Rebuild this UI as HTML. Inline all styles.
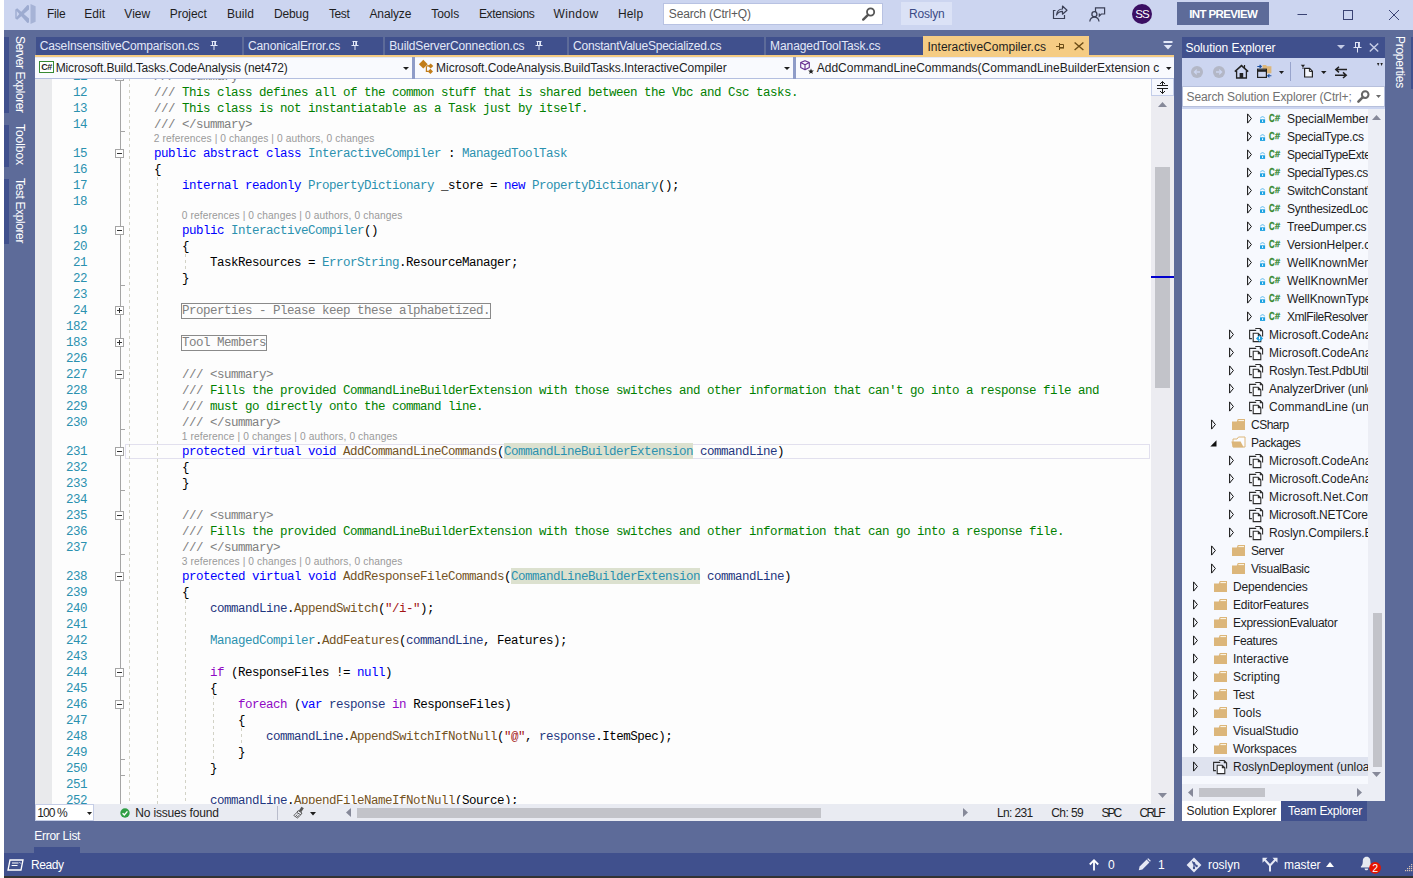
<!DOCTYPE html>
<html lang="en"><head><meta charset="utf-8"><title>InteractiveCompiler.cs - Roslyn</title>
<style>
html,body{margin:0;padding:0}
body{width:1413px;height:878px;overflow:hidden;position:relative;background:#5d6b99;font:12px/16px 'Liberation Sans',sans-serif;color:#1e1e1e}
div,span,svg{box-sizing:border-box}
svg{position:absolute;overflow:visible}

.k{color:#0000ff}.c{color:#8f08c4}.t{color:#2b91af}.m{color:#74531f}.v{color:#1f377f}.s{color:#a31515}.g{color:#008000}.x{color:#808080}
.code{position:absolute;left:126px;white-space:pre;font:12.5px/16px 'Liberation Mono',monospace;letter-spacing:-0.501px;color:#000;height:16px}
.ln{position:absolute;left:52px;width:35px;text-align:right;white-space:pre;font:12.5px/16px 'Liberation Mono',monospace;letter-spacing:-0.501px;color:#2b91af;height:16px}
.hl{background:#dce1cf;padding:2.4px 0 0}

</style></head><body>
<div style="position:absolute;left:0px;top:0px;width:1413px;height:30px;background:#ccd5f0;"></div>
<div style="position:absolute;left:0px;top:0px;width:4px;height:878px;background:#ffffff;"></div>
<div style="position:absolute;left:4px;top:876px;width:1409px;height:2px;background:#333333;"></div>
<div style="position:absolute;left:4px;top:853px;width:1409px;height:23px;background:#40508d;"></div>
<span style="position:absolute;left:46.9px;top:6px;white-space:pre;color:#1e1e1e;font:normal 12px/16px 'Liberation Sans',sans-serif;letter-spacing:-0.186px;">File</span>
<span style="position:absolute;left:84.3px;top:6px;white-space:pre;color:#1e1e1e;font:normal 12px/16px 'Liberation Sans',sans-serif;letter-spacing:0.053px;">Edit</span>
<span style="position:absolute;left:124.3px;top:6px;white-space:pre;color:#1e1e1e;font:normal 12px/16px 'Liberation Sans',sans-serif;letter-spacing:0.051px;">View</span>
<span style="position:absolute;left:169.7px;top:6px;white-space:pre;color:#1e1e1e;font:normal 12px/16px 'Liberation Sans',sans-serif;letter-spacing:-0.023px;">Project</span>
<span style="position:absolute;left:227.0px;top:6px;white-space:pre;color:#1e1e1e;font:normal 12px/16px 'Liberation Sans',sans-serif;letter-spacing:0.062px;">Build</span>
<span style="position:absolute;left:273.9px;top:6px;white-space:pre;color:#1e1e1e;font:normal 12px/16px 'Liberation Sans',sans-serif;letter-spacing:-0.095px;">Debug</span>
<span style="position:absolute;left:328.9px;top:6px;white-space:pre;color:#1e1e1e;font:normal 12px/16px 'Liberation Sans',sans-serif;letter-spacing:-0.354px;">Test</span>
<span style="position:absolute;left:369.5px;top:6px;white-space:pre;color:#1e1e1e;font:normal 12px/16px 'Liberation Sans',sans-serif;letter-spacing:-0.129px;">Analyze</span>
<span style="position:absolute;left:431.2px;top:6px;white-space:pre;color:#1e1e1e;font:normal 12px/16px 'Liberation Sans',sans-serif;letter-spacing:-0.003px;">Tools</span>
<span style="position:absolute;left:478.9px;top:6px;white-space:pre;color:#1e1e1e;font:normal 12px/16px 'Liberation Sans',sans-serif;letter-spacing:-0.310px;">Extensions</span>
<span style="position:absolute;left:553.5px;top:6px;white-space:pre;color:#1e1e1e;font:normal 12px/16px 'Liberation Sans',sans-serif;letter-spacing:0.385px;">Window</span>
<span style="position:absolute;left:618.0px;top:6px;white-space:pre;color:#1e1e1e;font:normal 12px/16px 'Liberation Sans',sans-serif;letter-spacing:0.128px;">Help</span>
<svg style="left:14.5px;top:4px" width="21" height="20" viewBox="0 0 21 20"><g fill="#9dabd0"><path d="M0.3 5.4 L2.2 4.2 L14 14.4 V18.4 L12.4 18.9 Z"/><path d="M0.3 14.6 L2.2 15.8 L14 5.6 V1.6 L12.4 1.1 Z"/><path d="M0.3 5.4 L1.7 6.6 V13.4 L0.3 14.6 Z"/></g><path d="M15.5 0 L20.6 2.2 V17.8 L15.5 20 Z" fill="#a6b3d6"/></svg>
<div style="position:absolute;left:663px;top:3px;width:220px;height:22px;background:#ffffff;border:1px solid #b8c2e2;"></div>
<span style="position:absolute;left:668.8px;top:6px;white-space:pre;color:#5a5a5a;font:normal 12px/16px 'Liberation Sans',sans-serif;letter-spacing:-0.157px;">Search (Ctrl+Q)</span>
<svg style="left:862px;top:7px" width="14" height="14" viewBox="0 0 14 14"><circle cx="8.6" cy="5" r="3.6" fill="none" stroke="#555" stroke-width="1.8"/><path d="M6 7.8 L1.2 12.6" stroke="#555" stroke-width="2.4" stroke-linecap="round"/></svg>
<div style="position:absolute;left:901px;top:2px;width:51px;height:23px;background:#dbe2f6;"></div>
<span style="position:absolute;left:909px;top:6px;white-space:pre;color:#3c4a85;font:normal 12px/16px 'Liberation Sans',sans-serif;letter-spacing:-0.198px;">Roslyn</span>
<svg style="left:1052px;top:4px" width="16" height="16" viewBox="0 0 16 16"><path d="M3.5 6.5 H1.5 V14.5 H12.5 V11" fill="none" stroke="#3a3f55" stroke-width="1.2"/><path d="M4.5 11 C5 7 7.5 5 10.5 5 V2 L15 6.2 L10.5 10.2 V7.4 C8 7.4 6 8.4 4.5 11 Z" fill="none" stroke="#3a3f55" stroke-width="1.2" stroke-linejoin="round"/></svg>
<svg style="left:1089px;top:7px" width="17" height="15" viewBox="0 0 17 15"><path d="M6.5 5 V0.8 H15.6 V7 H12.3 L10.3 9 V7 H9.6" fill="none" stroke="#3a3f55" stroke-width="1.2"/><circle cx="5.4" cy="7.2" r="2.5" fill="none" stroke="#3a3f55" stroke-width="1.3"/><path d="M0.8 14.5 C1.2 11.5 3 10.2 5.4 10.2 C7.8 10.2 9.6 11.5 10 14.5" fill="none" stroke="#3a3f55" stroke-width="1.3"/></svg>
<div style="position:absolute;left:1132px;top:3.5px;width:20px;height:20px;background:#3b0f63;border-radius:50%;"></div>
<span style="position:absolute;left:1135.2px;top:5.5px;white-space:pre;color:#ffffff;font:normal 11.5px/16px 'Liberation Sans',sans-serif;letter-spacing:-0.872px;">SS</span>
<div style="position:absolute;left:1177px;top:2px;width:92px;height:23px;background:#5d6b99;"></div>
<span style="position:absolute;left:1189.2px;top:5.5px;white-space:pre;color:#ffffff;font:bold 11.5px/16px 'Liberation Sans',sans-serif;letter-spacing:-0.615px;">INT PREVIEW</span>
<svg style="left:1290px;top:4px" width="120" height="22" viewBox="0 0 120 22"><path d="M7.5 10.5 H17" stroke="#3a4374" stroke-width="1"/><rect x="53.5" y="6.5" width="9" height="9" fill="none" stroke="#3a4374" stroke-width="1"/><path d="M99 6 L109 16 M109 6 L99 16" stroke="#3a4374" stroke-width="1"/></svg>
<div style="position:absolute;left:4px;top:37px;width:5px;height:76px;background:#40508d;"></div>
<span style="position:absolute;left:27.5px;top:36.2px;white-space:pre;color:#ffffff;font:normal 12px/16px 'Liberation Sans',sans-serif;letter-spacing:-0.458px;transform-origin:0 0;transform:rotate(90deg);">Server Explorer</span>
<div style="position:absolute;left:4px;top:125px;width:5px;height:42px;background:#40508d;"></div>
<span style="position:absolute;left:27.5px;top:124.2px;white-space:pre;color:#ffffff;font:normal 12px/16px 'Liberation Sans',sans-serif;letter-spacing:-0.054px;transform-origin:0 0;transform:rotate(90deg);">Toolbox</span>
<div style="position:absolute;left:4px;top:179px;width:5px;height:65px;background:#40508d;"></div>
<span style="position:absolute;left:27.5px;top:178.2px;white-space:pre;color:#ffffff;font:normal 12px/16px 'Liberation Sans',sans-serif;letter-spacing:-0.387px;transform-origin:0 0;transform:rotate(90deg);">Test Explorer</span>
<div style="position:absolute;left:36px;top:37px;width:206px;height:18px;background:#40508d;"></div>
<span style="position:absolute;left:39.7px;top:38px;white-space:pre;color:#e3e8f8;font:normal 12px/16px 'Liberation Sans',sans-serif;letter-spacing:-0.188px;">CaseInsensitiveComparison.cs</span>
<svg style="left:210px;top:41px" width="8" height="9" viewBox="0 0 8 9"><path d="M1.5 0.5 H6.5 M2.5 0.5 V4.5 M5.5 0.5 V4.5 M4.8 0.5 V4.5 M0.5 4.5 H7.5 M4 4.5 V9" fill="none" stroke="#e3e8f8" stroke-width="1"/></svg>
<div style="position:absolute;left:244px;top:37px;width:139px;height:18px;background:#40508d;"></div>
<span style="position:absolute;left:248.1px;top:38px;white-space:pre;color:#e3e8f8;font:normal 12px/16px 'Liberation Sans',sans-serif;letter-spacing:-0.160px;">CanonicalError.cs</span>
<svg style="left:351px;top:41px" width="8" height="9" viewBox="0 0 8 9"><path d="M1.5 0.5 H6.5 M2.5 0.5 V4.5 M5.5 0.5 V4.5 M4.8 0.5 V4.5 M0.5 4.5 H7.5 M4 4.5 V9" fill="none" stroke="#e3e8f8" stroke-width="1"/></svg>
<div style="position:absolute;left:384.5px;top:37px;width:182.5px;height:18px;background:#40508d;"></div>
<span style="position:absolute;left:389.2px;top:38px;white-space:pre;color:#e3e8f8;font:normal 12px/16px 'Liberation Sans',sans-serif;letter-spacing:-0.116px;">BuildServerConnection.cs</span>
<svg style="left:535px;top:41px" width="8" height="9" viewBox="0 0 8 9"><path d="M1.5 0.5 H6.5 M2.5 0.5 V4.5 M5.5 0.5 V4.5 M4.8 0.5 V4.5 M0.5 4.5 H7.5 M4 4.5 V9" fill="none" stroke="#e3e8f8" stroke-width="1"/></svg>
<div style="position:absolute;left:568.5px;top:37px;width:195.5px;height:18px;background:#40508d;"></div>
<span style="position:absolute;left:573.1px;top:38px;white-space:pre;color:#e3e8f8;font:normal 12px/16px 'Liberation Sans',sans-serif;letter-spacing:-0.231px;">ConstantValueSpecialized.cs</span>
<div style="position:absolute;left:765.5px;top:37px;width:157.5px;height:18px;background:#40508d;"></div>
<span style="position:absolute;left:770.1px;top:38px;white-space:pre;color:#e3e8f8;font:normal 12px/16px 'Liberation Sans',sans-serif;letter-spacing:-0.092px;">ManagedToolTask.cs</span>
<div style="position:absolute;left:923px;top:36px;width:166px;height:21px;background:#f5cc84;"></div>
<span style="position:absolute;left:927.5px;top:38.5px;white-space:pre;color:#1e1e1e;font:normal 12px/16px 'Liberation Sans',sans-serif;letter-spacing:0.021px;">InteractiveCompiler.cs</span>
<svg style="left:1056px;top:43px" width="9" height="8" viewBox="0 0 9 8"><path d="M0 3.5 H3.5 M3.5 0 V7 M3.5 1.5 H7.5 V5" fill="none" stroke="#6b4c16" stroke-width="1"/><rect x="3.5" y="4" width="4.5" height="1.6" fill="#6b4c16"/></svg>
<svg style="left:1074px;top:42px" width="10" height="9" viewBox="0 0 10 9"><path d="M0.6 0.5 L9.4 8 M9.4 0.5 L0.6 8" stroke="#6b4c16" stroke-width="1.4"/></svg>
<svg style="left:1163px;top:41px" width="10" height="10" viewBox="0 0 10 10"><path d="M0.5 1 H9.5" stroke="#e3e8f8" stroke-width="2"/><path d="M0.8 4 H9.2 L5 8.5 Z" fill="#e3e8f8"/></svg>
<div style="position:absolute;left:35px;top:55px;width:1139px;height:2px;background:#f5cc84;"></div>
<div style="position:absolute;left:35px;top:57px;width:1139px;height:22px;background:#f9fafe;border-top:1px solid #e4e9f8;border-bottom:1px solid #b4bfe0;"></div>
<div style="position:absolute;left:412px;top:57px;width:3px;height:22px;background:#8f9cc8;"></div>
<div style="position:absolute;left:793px;top:57px;width:3px;height:22px;background:#8f9cc8;"></div>
<svg style="left:403px;top:67px" width="6" height="3" viewBox="0 0 6 3"><path d="M0 0 H6 L3.0 3 Z" fill="#1e1e1e"/></svg>
<svg style="left:784px;top:67px" width="6" height="3" viewBox="0 0 6 3"><path d="M0 0 H6 L3.0 3 Z" fill="#1e1e1e"/></svg>
<svg style="left:1165.5px;top:67px" width="5.5" height="3" viewBox="0 0 5.5 3"><path d="M0 0 H5.5 L2.75 3 Z" fill="#1e1e1e"/></svg>
<svg style="left:39px;top:61px" width="15" height="12" viewBox="0 0 15 12"><rect x="0.5" y="0.5" width="14" height="11" fill="#fff" stroke="#388a34" stroke-width="1"/></svg>
<span style="position:absolute;left:41.2px;top:60.5px;white-space:pre;color:#1e1e1e;font:bold 9px/13px 'Liberation Sans',sans-serif;letter-spacing:-0.508px;">C#</span>
<span style="position:absolute;left:55.7px;top:59.5px;white-space:pre;color:#1e1e1e;font:normal 12px/16px 'Liberation Sans',sans-serif;letter-spacing:-0.126px;">Microsoft.Build.Tasks.CodeAnalysis (net472)</span>
<svg style="left:418px;top:59px" width="16" height="16" viewBox="0 0 16 16"><g fill="#c27d1a"><path d="M5.3 0.8 L9.7 5.2 L5.3 9.6 L0.9 5.2 Z"/><path d="M12.7 4.4 L15.3 7 L12.7 9.6 L10.1 7 Z"/><path d="M12.4 9.8 L15 12.4 L12.4 15 L9.8 12.4 Z"/></g><path d="M8.6 6.9 H11 M8.4 7.2 V12.4 H10.4" fill="none" stroke="#c27d1a" stroke-width="1.2"/></svg>
<span style="position:absolute;left:436.1px;top:59.5px;white-space:pre;color:#1e1e1e;font:normal 12px/16px 'Liberation Sans',sans-serif;letter-spacing:-0.043px;">Microsoft.CodeAnalysis.BuildTasks.InteractiveCompiler</span>
<svg style="left:800px;top:60px" width="15" height="15" viewBox="0 0 15 15"><path d="M5 0.7 L9.3 2.6 V7.6 L5 9.8 L0.7 7.6 V2.6 Z M0.7 2.6 L5 4.8 L9.3 2.6 M5 4.8 V9.8" fill="none" stroke="#652d90" stroke-width="1.1" stroke-linejoin="round"/><path d="M11 8.6 L11.8 10.6 L13.9 10.6 L12.2 11.9 L12.9 14 L11 12.7 L9.1 14 L9.8 11.9 L8.1 10.6 L10.2 10.6 Z" fill="#1e1e1e"/></svg>
<span style="position:absolute;left:816.7px;top:59.5px;white-space:pre;color:#1e1e1e;font:normal 12px/16px 'Liberation Sans',sans-serif;letter-spacing:0.006px;">AddCommandLineCommands(CommandLineBuilderExtension c</span>
<div style="position:absolute;left:35px;top:79px;width:1116px;height:725px;background:#fdfdfd;"></div>
<div style="position:absolute;left:35px;top:79px;width:17px;height:725px;background:#e9eaec;"></div>
<div style="position:absolute;left:0;top:0;width:1413px;height:878px;clip-path:inset(79px 262px 74px 35px)">
<span class="ln" style="top:69px">11</span>
<span class="code" style="top:69px">    <span class="x">/// &lt;summary&gt;</span></span>
<span class="ln" style="top:85px">12</span>
<span class="code" style="top:85px">    <span class="x">/// </span><span class="g">This class defines all of the common stuff that is shared between the Vbc and Csc tasks.</span></span>
<span class="ln" style="top:101px">13</span>
<span class="code" style="top:101px">    <span class="x">/// </span><span class="g">This class is not instantiatable as a Task just by itself.</span></span>
<span class="ln" style="top:117px">14</span>
<span class="code" style="top:117px">    <span class="x">/// &lt;/summary&gt;</span></span>
<span style="position:absolute;left:153.7px;top:131.5px;white-space:pre;color:#9a9a9a;font:normal 10.2px/13px 'Liberation Sans',sans-serif;letter-spacing:0.115px;">2 references | 0 changes | 0 authors, 0 changes</span>
<span class="ln" style="top:146px">15</span>
<span class="code" style="top:146px">    <span class="k">public abstract class </span><span class="t">InteractiveCompiler</span> : <span class="t">ManagedToolTask</span></span>
<span class="ln" style="top:162px">16</span>
<span class="code" style="top:162px">    {</span>
<span class="ln" style="top:178px">17</span>
<span class="code" style="top:178px">        <span class="k">internal readonly </span><span class="t">PropertyDictionary</span> _store = <span class="k">new </span><span class="t">PropertyDictionary</span>();</span>
<span class="ln" style="top:194px">18</span>
<span style="position:absolute;left:181.7px;top:208.5px;white-space:pre;color:#9a9a9a;font:normal 10.2px/13px 'Liberation Sans',sans-serif;letter-spacing:0.115px;">0 references | 0 changes | 0 authors, 0 changes</span>
<span class="ln" style="top:223px">19</span>
<span class="code" style="top:223px">        <span class="k">public </span><span class="t">InteractiveCompiler</span>()</span>
<span class="ln" style="top:239px">20</span>
<span class="code" style="top:239px">        {</span>
<span class="ln" style="top:255px">21</span>
<span class="code" style="top:255px">            TaskResources = <span class="t">ErrorString</span>.ResourceManager;</span>
<span class="ln" style="top:271px">22</span>
<span class="code" style="top:271px">        }</span>
<span class="ln" style="top:287px">23</span>
<span class="ln" style="top:303px">24</span>
<span class="code" style="top:303px">        <span class="x" style="outline:1px solid #8a8a8a;outline-offset:0px">Properties - Please keep these alphabetized.</span></span>
<span class="ln" style="top:319px">182</span>
<span class="ln" style="top:335px">183</span>
<span class="code" style="top:335px">        <span class="x" style="outline:1px solid #8a8a8a;outline-offset:0px">Tool Members</span></span>
<span class="ln" style="top:351px">226</span>
<span class="ln" style="top:367px">227</span>
<span class="code" style="top:367px">        <span class="x">/// &lt;summary&gt;</span></span>
<span class="ln" style="top:383px">228</span>
<span class="code" style="top:383px">        <span class="x">/// </span><span class="g">Fills the provided CommandLineBuilderExtension with those switches and other information that can't go into a response file and</span></span>
<span class="ln" style="top:399px">229</span>
<span class="code" style="top:399px">        <span class="x">/// </span><span class="g">must go directly onto the command line.</span></span>
<span class="ln" style="top:415px">230</span>
<span class="code" style="top:415px">        <span class="x">/// &lt;/summary&gt;</span></span>
<span style="position:absolute;left:181.7px;top:429.5px;white-space:pre;color:#9a9a9a;font:normal 10.2px/13px 'Liberation Sans',sans-serif;letter-spacing:0.119px;">1 reference | 0 changes | 0 authors, 0 changes</span>
<div style="position:absolute;left:125px;top:444px;width:1025px;height:15px;border:1px solid #e2e0ee;"></div>
<span class="ln" style="top:444px">231</span>
<span class="code" style="top:444px">        <span class="k">protected virtual void </span><span class="m">AddCommandLineCommands</span>(<span class="t hl">CommandLineBuilderExtension</span> <span class="v">commandLine</span>)</span>
<span class="ln" style="top:460px">232</span>
<span class="code" style="top:460px">        {</span>
<span class="ln" style="top:476px">233</span>
<span class="code" style="top:476px">        }</span>
<span class="ln" style="top:492px">234</span>
<span class="ln" style="top:508px">235</span>
<span class="code" style="top:508px">        <span class="x">/// &lt;summary&gt;</span></span>
<span class="ln" style="top:524px">236</span>
<span class="code" style="top:524px">        <span class="x">/// </span><span class="g">Fills the provided CommandLineBuilderExtension with those switches and other information that can go into a response file.</span></span>
<span class="ln" style="top:540px">237</span>
<span class="code" style="top:540px">        <span class="x">/// &lt;/summary&gt;</span></span>
<span style="position:absolute;left:181.7px;top:554.5px;white-space:pre;color:#9a9a9a;font:normal 10.2px/13px 'Liberation Sans',sans-serif;letter-spacing:0.115px;">3 references | 0 changes | 0 authors, 0 changes</span>
<span class="ln" style="top:569px">238</span>
<span class="code" style="top:569px">        <span class="k">protected virtual void </span><span class="m">AddResponseFileCommands</span>(<span class="t hl">CommandLineBuilderExtension</span> <span class="v">commandLine</span>)</span>
<span class="ln" style="top:585px">239</span>
<span class="code" style="top:585px">        {</span>
<span class="ln" style="top:601px">240</span>
<span class="code" style="top:601px">            <span class="v">commandLine</span>.<span class="m">AppendSwitch</span>(<span class="s">"/i-"</span>);</span>
<span class="ln" style="top:617px">241</span>
<span class="ln" style="top:633px">242</span>
<span class="code" style="top:633px">            <span class="t">ManagedCompiler</span>.<span class="m">AddFeatures</span>(<span class="v">commandLine</span>, Features);</span>
<span class="ln" style="top:649px">243</span>
<span class="ln" style="top:665px">244</span>
<span class="code" style="top:665px">            <span class="c">if</span> (ResponseFiles != <span class="k">null</span>)</span>
<span class="ln" style="top:681px">245</span>
<span class="code" style="top:681px">            {</span>
<span class="ln" style="top:697px">246</span>
<span class="code" style="top:697px">                <span class="c">foreach</span> (<span class="k">var</span> <span class="v">response</span> <span class="c">in</span> ResponseFiles)</span>
<span class="ln" style="top:713px">247</span>
<span class="code" style="top:713px">                {</span>
<span class="ln" style="top:729px">248</span>
<span class="code" style="top:729px">                    <span class="v">commandLine</span>.<span class="m">AppendSwitchIfNotNull</span>(<span class="s">"@"</span>, <span class="v">response</span>.ItemSpec);</span>
<span class="ln" style="top:745px">249</span>
<span class="code" style="top:745px">                }</span>
<span class="ln" style="top:761px">250</span>
<span class="code" style="top:761px">            }</span>
<span class="ln" style="top:777px">251</span>
<span class="ln" style="top:793px">252</span>
<span class="code" style="top:793px">            <span class="v">commandLine</span>.<span class="m">AppendFileNameIfNotNull</span>(Source);</span>
<div style="position:absolute;left:120px;top:78px;width:1px;height:726px;background:#a5a5a5;"></div>
<svg style="left:115px;top:72px" width="9" height="9" viewBox="0 0 9 9"><rect x="0.5" y="0.5" width="8" height="8" fill="#fff" stroke="#a5a5a5"/><path d="M2 4.5 H7" stroke="#333" stroke-width="1"/></svg>
<svg style="left:115px;top:149px" width="9" height="9" viewBox="0 0 9 9"><rect x="0.5" y="0.5" width="8" height="8" fill="#fff" stroke="#a5a5a5"/><path d="M2 4.5 H7" stroke="#333" stroke-width="1"/></svg>
<svg style="left:115px;top:226px" width="9" height="9" viewBox="0 0 9 9"><rect x="0.5" y="0.5" width="8" height="8" fill="#fff" stroke="#a5a5a5"/><path d="M2 4.5 H7" stroke="#333" stroke-width="1"/></svg>
<svg style="left:115px;top:370px" width="9" height="9" viewBox="0 0 9 9"><rect x="0.5" y="0.5" width="8" height="8" fill="#fff" stroke="#a5a5a5"/><path d="M2 4.5 H7" stroke="#333" stroke-width="1"/></svg>
<svg style="left:115px;top:447px" width="9" height="9" viewBox="0 0 9 9"><rect x="0.5" y="0.5" width="8" height="8" fill="#fff" stroke="#a5a5a5"/><path d="M2 4.5 H7" stroke="#333" stroke-width="1"/></svg>
<svg style="left:115px;top:511px" width="9" height="9" viewBox="0 0 9 9"><rect x="0.5" y="0.5" width="8" height="8" fill="#fff" stroke="#a5a5a5"/><path d="M2 4.5 H7" stroke="#333" stroke-width="1"/></svg>
<svg style="left:115px;top:572px" width="9" height="9" viewBox="0 0 9 9"><rect x="0.5" y="0.5" width="8" height="8" fill="#fff" stroke="#a5a5a5"/><path d="M2 4.5 H7" stroke="#333" stroke-width="1"/></svg>
<svg style="left:115px;top:668px" width="9" height="9" viewBox="0 0 9 9"><rect x="0.5" y="0.5" width="8" height="8" fill="#fff" stroke="#a5a5a5"/><path d="M2 4.5 H7" stroke="#333" stroke-width="1"/></svg>
<svg style="left:115px;top:700px" width="9" height="9" viewBox="0 0 9 9"><rect x="0.5" y="0.5" width="8" height="8" fill="#fff" stroke="#a5a5a5"/><path d="M2 4.5 H7" stroke="#333" stroke-width="1"/></svg>
<svg style="left:115px;top:306px" width="9" height="9" viewBox="0 0 9 9"><rect x="0.5" y="0.5" width="8" height="8" fill="#fff" stroke="#a5a5a5"/><path d="M2 4.5 H7" stroke="#333" stroke-width="1"/><path d="M4.5 2 V7" stroke="#333" stroke-width="1"/></svg>
<svg style="left:115px;top:338px" width="9" height="9" viewBox="0 0 9 9"><rect x="0.5" y="0.5" width="8" height="8" fill="#fff" stroke="#a5a5a5"/><path d="M2 4.5 H7" stroke="#333" stroke-width="1"/><path d="M4.5 2 V7" stroke="#333" stroke-width="1"/></svg>
<div style="position:absolute;left:120px;top:131px;width:5px;height:1px;background:#a5a5a5;"></div>
<div style="position:absolute;left:120px;top:285px;width:5px;height:1px;background:#a5a5a5;"></div>
<div style="position:absolute;left:120px;top:429px;width:5px;height:1px;background:#a5a5a5;"></div>
<div style="position:absolute;left:120px;top:490px;width:5px;height:1px;background:#a5a5a5;"></div>
<div style="position:absolute;left:120px;top:554px;width:5px;height:1px;background:#a5a5a5;"></div>
<div style="position:absolute;left:120px;top:759px;width:5px;height:1px;background:#a5a5a5;"></div>
<div style="position:absolute;left:120px;top:775px;width:5px;height:1px;background:#a5a5a5;"></div>
<div style="position:absolute;left:129px;top:78px;width:1px;height:726px;background:repeating-linear-gradient(to bottom,#d2d2c6 0,#d2d2c6 3px,transparent 3px,transparent 6px)"></div>
<div style="position:absolute;left:157px;top:177px;width:1px;height:627px;background:repeating-linear-gradient(to bottom,#d2d2c6 0,#d2d2c6 3px,transparent 3px,transparent 6px)"></div>
<div style="position:absolute;left:185px;top:254px;width:1px;height:16px;background:repeating-linear-gradient(to bottom,#d2d2c6 0,#d2d2c6 3px,transparent 3px,transparent 6px)"></div>
<div style="position:absolute;left:185px;top:600px;width:1px;height:204px;background:repeating-linear-gradient(to bottom,#d2d2c6 0,#d2d2c6 3px,transparent 3px,transparent 6px)"></div>
<div style="position:absolute;left:213px;top:696px;width:1px;height:64px;background:repeating-linear-gradient(to bottom,#d2d2c6 0,#d2d2c6 3px,transparent 3px,transparent 6px)"></div>
<div style="position:absolute;left:241px;top:728px;width:1px;height:16px;background:repeating-linear-gradient(to bottom,#d2d2c6 0,#d2d2c6 3px,transparent 3px,transparent 6px)"></div>
</div>
<div style="position:absolute;left:1151px;top:79px;width:23px;height:725px;background:#ececf1;"></div>
<div style="position:absolute;left:1151px;top:79px;width:23px;height:17px;background:#f5f7fd;border:1px solid #c3cde9;border-top:0;"></div>
<svg style="left:1156px;top:80px" width="13" height="14" viewBox="0 0 13 14"><path d="M1 5.5 H12 M1 8.5 H12" stroke="#1e1e1e" stroke-width="1"/><path d="M6.5 1.5 V5 M6.5 9 V13.5" stroke="#1e1e1e" stroke-width="1"/><path d="M4 4 L6.5 1.5 L9 4 M4 11 L6.5 13.5 L9 11" fill="none" stroke="#1e1e1e" stroke-width="1"/></svg>
<svg style="left:1158px;top:102px" width="9" height="5" viewBox="0 0 9 5"><path d="M0 5 L4.5 0 L9 5 Z" fill="#868999"/></svg>
<svg style="left:1158px;top:793px" width="9" height="5" viewBox="0 0 9 5"><path d="M0 0 L4.5 5 L9 0 Z" fill="#868999"/></svg>
<div style="position:absolute;left:1155px;top:167px;width:15px;height:221px;background:#c2c3c9;"></div>
<div style="position:absolute;left:1151px;top:276px;width:23px;height:2px;background:#0000cd;"></div>
<div style="position:absolute;left:35px;top:804px;width:1139px;height:17px;background:#e9ebf2;"></div>
<div style="position:absolute;left:35px;top:804px;width:59px;height:17px;background:#ffffff;border:1px solid #c5cde6;"></div>
<span style="position:absolute;left:37.2px;top:805px;white-space:pre;color:#1e1e1e;font:normal 12px/16px 'Liberation Sans',sans-serif;letter-spacing:-0.906px;">100 %</span>
<svg style="left:86.5px;top:811.5px" width="5" height="3" viewBox="0 0 5 3"><path d="M0 0 H5 L2.5 3 Z" fill="#1e1e1e"/></svg>
<svg style="left:120px;top:808px" width="10" height="10" viewBox="0 0 10 10"><circle cx="5" cy="5" r="4.7" fill="#2f9e44"/><path d="M2.6 5.2 L4.3 6.9 L7.4 3.4" fill="none" stroke="#fff" stroke-width="1.4"/></svg>
<span style="position:absolute;left:135.3px;top:805px;white-space:pre;color:#1e1e1e;font:normal 12px/16px 'Liberation Sans',sans-serif;letter-spacing:-0.171px;">No issues found</span>
<div style="position:absolute;left:277px;top:806px;width:1px;height:14px;background:#b9bccb;"></div>
<svg style="left:293px;top:806px" width="12" height="13" viewBox="0 0 12 13"><path d="M8.5 0.8 L10.8 2.2 L8.2 6.2 L5.9 4.8 Z" fill="#555"/><path d="M5.2 4.6 L9 7 L7.8 8.8 L3.8 6.5 Z" fill="none" stroke="#555" stroke-width="1"/><path d="M3.8 6.5 L0.8 9.5 L4.5 12 L7.8 8.8 M2.5 10.5 L4.3 8.6 M4 11.3 L5.6 9.4" fill="none" stroke="#555" stroke-width="0.9"/></svg>
<svg style="left:309.5px;top:811.5px" width="6" height="3.5" viewBox="0 0 6 3.5"><path d="M0 0 H6 L3.0 3.5 Z" fill="#1e1e1e"/></svg>
<svg style="left:346px;top:808px" width="5" height="9" viewBox="0 0 5 9"><path d="M5 0 L0 4.5 L5 9 Z" fill="#868999"/></svg>
<svg style="left:963px;top:808px" width="5" height="9" viewBox="0 0 5 9"><path d="M0 0 L5 4.5 L0 9 Z" fill="#868999"/></svg>
<div style="position:absolute;left:357px;top:808px;width:463.5px;height:10px;background:#c2c3c9;"></div>
<span style="position:absolute;left:997.0px;top:805px;white-space:pre;color:#1e1e1e;font:normal 12px/16px 'Liberation Sans',sans-serif;letter-spacing:-0.650px;">Ln: 231</span>
<span style="position:absolute;left:1051.3px;top:805px;white-space:pre;color:#1e1e1e;font:normal 12px/16px 'Liberation Sans',sans-serif;letter-spacing:-0.593px;">Ch: 59</span>
<span style="position:absolute;left:1101.4px;top:805px;white-space:pre;color:#1e1e1e;font:normal 12px/16px 'Liberation Sans',sans-serif;letter-spacing:-1.996px;">SPC</span>
<span style="position:absolute;left:1139.5px;top:805px;white-space:pre;color:#1e1e1e;font:normal 12px/16px 'Liberation Sans',sans-serif;letter-spacing:-1.761px;">CRLF</span>
<span style="position:absolute;left:34.2px;top:827.5px;white-space:pre;color:#ffffff;font:normal 12px/16px 'Liberation Sans',sans-serif;letter-spacing:-0.269px;">Error List</span>
<div style="position:absolute;left:34px;top:847px;width:46px;height:6px;background:#40508d;"></div>
<svg style="left:7px;top:859px" width="17" height="12" viewBox="0 0 17 12"><path d="M3 1 H16 L14 11 H1 Z" fill="none" stroke="#ffffff" stroke-width="1.3"/><path d="M5 4 H11.5 M4.6 6.5 H10.5" stroke="#ffffff" stroke-width="1.1"/><path d="M12.5 3.2 L13.8 4.5" stroke="#ffffff" stroke-width="1"/></svg>
<span style="position:absolute;left:31px;top:856.5px;white-space:pre;color:#ffffff;font:normal 12px/16px 'Liberation Sans',sans-serif;letter-spacing:-0.438px;">Ready</span>
<svg style="left:1089px;top:859px" width="10" height="12" viewBox="0 0 10 12"><path d="M5 11.5 V1.5 M0.8 5.5 L5 1.2 L9.2 5.5" fill="none" stroke="#ffffff" stroke-width="1.8"/></svg>
<span style="position:absolute;left:1108px;top:856.5px;white-space:pre;color:#ffffff;font:normal 12px/16px 'Liberation Sans',sans-serif;">0</span>
<svg style="left:1138px;top:858px" width="13" height="13" viewBox="0 0 13 13"><path d="M0.8 12.2 L1.6 8.6 L8.6 1.6 L11.4 4.4 L4.4 11.4 Z" fill="#e6e9f5"/><path d="M9.2 1 L10.2 0.2 L12.8 2.8 L12 3.8 Z" fill="#e6e9f5"/></svg>
<span style="position:absolute;left:1158px;top:856.5px;white-space:pre;color:#ffffff;font:normal 12px/16px 'Liberation Sans',sans-serif;">1</span>
<svg style="left:1186px;top:857px" width="16" height="16" viewBox="0 0 16 16"><path d="M8 0.6 L15.4 8 L8 15.4 L0.6 8 Z" fill="#e6e9f5"/><path d="M6.2 4.5 L8 6.3 V11 M8 6.5 L10.5 9" fill="none" stroke="#40508d" stroke-width="1.2"/><circle cx="8" cy="6.3" r="1.2" fill="#40508d"/><circle cx="8" cy="11" r="1.2" fill="#40508d"/><circle cx="10.6" cy="9" r="1.2" fill="#40508d"/></svg>
<span style="position:absolute;left:1208px;top:856.5px;white-space:pre;color:#ffffff;font:normal 12px/16px 'Liberation Sans',sans-serif;letter-spacing:-0.036px;">roslyn</span>
<svg style="left:1262px;top:857px" width="16" height="15" viewBox="0 0 16 15"><path d="M8 14.5 V8.5 L2.5 2.5 M8 8.5 L13.5 2.5" fill="none" stroke="#e6e9f5" stroke-width="2"/><path d="M0.5 0.8 H5.5 L0.5 5.8 Z M15.5 0.8 H10.5 L15.5 5.8 Z" fill="#e6e9f5"/></svg>
<span style="position:absolute;left:1284px;top:856.5px;white-space:pre;color:#ffffff;font:normal 12px/16px 'Liberation Sans',sans-serif;letter-spacing:-0.031px;">master</span>
<svg style="left:1326px;top:862px" width="8" height="5" viewBox="0 0 8 5"><path d="M0 5 L4 0 L8 5 Z" fill="#ffffff"/></svg>
<svg style="left:1360px;top:856px" width="22" height="19" viewBox="0 0 22 19"><path d="M6.6 0.8 C9.6 0.8 10.4 3.3 10.4 5.6 C10.4 8.4 11.2 9.6 12.2 10.6 V11.6 H0.9 V10.6 C1.9 9.6 2.8 8.4 2.8 5.6 C2.8 3.3 3.6 0.8 6.6 0.8 Z M4.6 12.4 H8.2 C8.2 15 4.6 15 4.6 12.4 Z" fill="#e6eaf0"/><circle cx="15.1" cy="11.8" r="5.9" fill="#e51400"/></svg>
<span style="position:absolute;left:1372.3px;top:861.2px;white-space:pre;color:#ffffff;font:normal 10.5px/14px 'Liberation Sans',sans-serif;">2</span>
<svg style="left:1405px;top:863.5px" width="8" height="8" viewBox="0 0 8 8"><g fill="#d9c4b4"><rect x="6" y="0" width="1.2" height="1.2"/><rect x="6" y="2" width="1.2" height="1.2"/><rect x="4" y="2" width="1.2" height="1.2"/><rect x="6" y="4" width="1.2" height="1.2"/><rect x="4" y="4" width="1.2" height="1.2"/><rect x="2" y="4" width="1.2" height="1.2"/><rect x="6" y="6" width="1.2" height="1.2"/><rect x="4" y="6" width="1.2" height="1.2"/><rect x="2" y="6" width="1.2" height="1.2"/><rect x="0" y="6" width="1.2" height="1.2"/></g></svg>
<div style="position:absolute;left:1411px;top:37px;width:2px;height:52px;background:#40508d;"></div>
<span style="position:absolute;left:1407.7px;top:36.2px;white-space:pre;color:#ffffff;font:normal 12px/16px 'Liberation Sans',sans-serif;letter-spacing:-0.270px;transform-origin:0 0;transform:rotate(90deg);">Properties</span>
<div style="position:absolute;left:1182px;top:37px;width:203px;height:20.5px;background:#40508d;"></div>
<span style="position:absolute;left:1185.5px;top:40px;white-space:pre;color:#ffffff;font:normal 12px/16px 'Liberation Sans',sans-serif;letter-spacing:-0.082px;">Solution Explorer</span>
<svg style="left:1337px;top:45px" width="8" height="4" viewBox="0 0 8 4"><path d="M0 0 H8 L4 4 Z" fill="#c5cce6"/></svg>
<svg style="left:1353px;top:42px" width="9" height="11" viewBox="0 0 9 11"><path d="M2 0.5 H7 M2.5 0.5 V5.5 M5.5 0.5 V5.5 M6.4 0.5 V5.5 M0.5 5.5 H8.5 M4.5 5.5 V10.5" fill="none" stroke="#dfe4f5" stroke-width="1"/></svg>
<svg style="left:1369px;top:43px" width="10" height="9" viewBox="0 0 10 9"><path d="M0.8 0.5 L9.2 8.5 M9.2 0.5 L0.8 8.5" stroke="#c5cce6" stroke-width="1.5"/></svg>
<div style="position:absolute;left:1182px;top:57.5px;width:203px;height:29.5px;background:#ccd5f0;"></div>
<svg style="left:1191px;top:65.5px" width="12" height="12" viewBox="0 0 12 12"><circle cx="6" cy="6" r="6" fill="#b3b7c6"/><path d="M9 6 H3.6 M5.8 3.6 L3.4 6 L5.8 8.4" fill="none" stroke="#ccd5f0" stroke-width="1.3"/></svg>
<svg style="left:1213px;top:65.5px" width="12" height="12" viewBox="0 0 12 12"><circle cx="6" cy="6" r="6" fill="#b3b7c6"/><path d="M3 6 H8.4 M6.2 3.6 L8.6 6 L6.2 8.4" fill="none" stroke="#ccd5f0" stroke-width="1.3"/></svg>
<svg style="left:1234px;top:64px" width="15" height="15" viewBox="0 0 15 15"><path d="M0.8 7.6 L7.5 1.6 L14.2 7.6" fill="none" stroke="#222" stroke-width="1.5"/><path d="M10.5 1 V4" stroke="#222" stroke-width="1.2"/><path d="M2.6 6.8 V14 H12.4 V6.8" fill="none" stroke="#222" stroke-width="1.3"/><rect x="5.6" y="9" width="3.6" height="5" fill="#222"/></svg>
<svg style="left:1257px;top:64px" width="15" height="15" viewBox="0 0 15 15"><path d="M5.6 1 H9 L10 2.2 H14.4 V9.2 H5.6 Z" fill="#dcb67a"/><rect x="0.6" y="5.2" width="8.8" height="8.2" fill="#ccd5f0" stroke="#222" stroke-width="1.2"/><path d="M0.6 6.9 H9.4" stroke="#222" stroke-width="1.8"/><path d="M0.3 2.5 H4 M2.6 1 L4.3 2.5 L2.6 4" fill="none" stroke="#1c4fa0" stroke-width="1.1"/><path d="M14.4 11.8 H11 M12.4 10.3 L10.7 11.8 L12.4 13.3" fill="none" stroke="#1c4fa0" stroke-width="1.1"/></svg>
<svg style="left:1278.5px;top:70.5px" width="5" height="3" viewBox="0 0 5 3"><path d="M0 0 H5 L2.5 3 Z" fill="#1e1e1e"/></svg>
<div style="position:absolute;left:1290px;top:62px;width:1px;height:19px;background:#98a4cc;"></div>
<svg style="left:1300px;top:64px" width="14" height="14" viewBox="0 0 14 14"><path d="M0.8 0.8 H5 L3 3.4 Z" fill="#222"/><path d="M3 3.4 V5" stroke="#222" stroke-width="1"/><path d="M4.6 4.4 H9.6 L12.4 7.2 V13 H4.6 Z" fill="#f4f6fc" stroke="#222" stroke-width="1.2"/><path d="M9.4 4.6 V7.4 H12.2" fill="none" stroke="#222" stroke-width="1"/></svg>
<svg style="left:1321px;top:70.5px" width="5.5" height="3" viewBox="0 0 5.5 3"><path d="M0 0 H5.5 L2.75 3 Z" fill="#1e1e1e"/></svg>
<svg style="left:1334px;top:66px" width="14" height="13" viewBox="0 0 14 13"><path d="M13 3.6 H2 M5 0.8 L1.8 3.6 L5 6.4" fill="none" stroke="#222" stroke-width="1.5"/><path d="M1 9.2 H12 M9 6.4 L12.2 9.2 L9 12" fill="none" stroke="#222" stroke-width="1.5"/></svg>
<svg style="left:1377px;top:62.5px" width="6" height="4" viewBox="0 0 6 4"><path d="M0 0 H2.4 L1.2 3 Z M3.4 0 H5.8 L4.6 3 Z" fill="#222"/></svg>
<div style="position:absolute;left:1182px;top:86px;width:203px;height:21px;background:#ffffff;border:1px solid #b7c0dc;"></div>
<div style="position:absolute;left:1182px;top:107px;width:203px;height:2px;background:#ccd5f0;"></div>
<span style="position:absolute;left:1186.6px;top:88.5px;white-space:pre;color:#717171;font:normal 12px/16px 'Liberation Sans',sans-serif;letter-spacing:-0.127px;">Search Solution Explorer (Ctrl+;</span>
<svg style="left:1357px;top:90px" width="13" height="13" viewBox="0 0 13 13"><circle cx="8.2" cy="4.6" r="3.3" fill="none" stroke="#666" stroke-width="2"/><path d="M5.6 7.4 L1.4 11.6" stroke="#666" stroke-width="2.6" stroke-linecap="round"/></svg>
<svg style="left:1376px;top:95px" width="5" height="3" viewBox="0 0 5 3"><path d="M0 0 H5 L2.5 3 Z" fill="#6a6a6a"/></svg>
<div style="position:absolute;left:1182px;top:109px;width:203px;height:675px;background:#f7f9fe;"></div>
<div style="position:absolute;left:1182px;top:757px;width:186px;height:19px;background:#dfe3ef;"></div>
<div style="position:absolute;left:0;top:0;width:1413px;height:878px;clip-path:inset(109px 45px 94px 1182px)">
<svg style="left:1247px;top:113px" width="6" height="11" viewBox="0 0 6 11"><path d="M0.6 0.9 L4.4 5.5 L0.6 10.1 Z" fill="none" stroke="#111" stroke-width="1"/></svg>
<svg style="left:1260px;top:116px" width="6" height="7" viewBox="0 0 6 7"><path d="M0.5 2.3 C1 0.2 4.1 0.2 4.6 2.3" fill="none" stroke="#3fb0ea" stroke-width="0.9"/><rect x="0" y="3.3" width="5.1" height="3.6" fill="#1ba1e2"/><rect x="2.1" y="4.2" width="1" height="1.8" fill="#fff"/></svg>
<span style="position:absolute;left:1268.8px;top:110.95px;font:bold 10.8px/15px 'Liberation Sans',sans-serif;color:#388a34;-webkit-text-stroke:0.35px #388a34;white-space:pre;transform-origin:0 0;transform:scaleX(0.72)">C</span><span style="position:absolute;left:1274.8999999999999px;top:110.7px;font:bold 8.4px/15px 'Liberation Sans',sans-serif;color:#388a34;-webkit-text-stroke:0.3px #388a34;white-space:pre;transform-origin:0 0;transform:scaleX(1.08)">#</span>
<span style="position:absolute;left:1287.0px;top:110.8px;white-space:pre;color:#1e1e1e;font:normal 12px/16px 'Liberation Sans',sans-serif;letter-spacing:-0.098px;">SpecialMember.cs</span>
<svg style="left:1247px;top:131px" width="6" height="11" viewBox="0 0 6 11"><path d="M0.6 0.9 L4.4 5.5 L0.6 10.1 Z" fill="none" stroke="#111" stroke-width="1"/></svg>
<svg style="left:1260px;top:134px" width="6" height="7" viewBox="0 0 6 7"><path d="M0.5 2.3 C1 0.2 4.1 0.2 4.6 2.3" fill="none" stroke="#3fb0ea" stroke-width="0.9"/><rect x="0" y="3.3" width="5.1" height="3.6" fill="#1ba1e2"/><rect x="2.1" y="4.2" width="1" height="1.8" fill="#fff"/></svg>
<span style="position:absolute;left:1268.8px;top:128.95px;font:bold 10.8px/15px 'Liberation Sans',sans-serif;color:#388a34;-webkit-text-stroke:0.35px #388a34;white-space:pre;transform-origin:0 0;transform:scaleX(0.72)">C</span><span style="position:absolute;left:1274.8999999999999px;top:128.7px;font:bold 8.4px/15px 'Liberation Sans',sans-serif;color:#388a34;-webkit-text-stroke:0.3px #388a34;white-space:pre;transform-origin:0 0;transform:scaleX(1.08)">#</span>
<span style="position:absolute;left:1287.0px;top:128.8px;white-space:pre;color:#1e1e1e;font:normal 12px/16px 'Liberation Sans',sans-serif;letter-spacing:-0.287px;">SpecialType.cs</span>
<svg style="left:1247px;top:149px" width="6" height="11" viewBox="0 0 6 11"><path d="M0.6 0.9 L4.4 5.5 L0.6 10.1 Z" fill="none" stroke="#111" stroke-width="1"/></svg>
<svg style="left:1260px;top:152px" width="6" height="7" viewBox="0 0 6 7"><path d="M0.5 2.3 C1 0.2 4.1 0.2 4.6 2.3" fill="none" stroke="#3fb0ea" stroke-width="0.9"/><rect x="0" y="3.3" width="5.1" height="3.6" fill="#1ba1e2"/><rect x="2.1" y="4.2" width="1" height="1.8" fill="#fff"/></svg>
<span style="position:absolute;left:1268.8px;top:146.95px;font:bold 10.8px/15px 'Liberation Sans',sans-serif;color:#388a34;-webkit-text-stroke:0.35px #388a34;white-space:pre;transform-origin:0 0;transform:scaleX(0.72)">C</span><span style="position:absolute;left:1274.8999999999999px;top:146.7px;font:bold 8.4px/15px 'Liberation Sans',sans-serif;color:#388a34;-webkit-text-stroke:0.3px #388a34;white-space:pre;transform-origin:0 0;transform:scaleX(1.08)">#</span>
<span style="position:absolute;left:1287.0px;top:146.8px;white-space:pre;color:#1e1e1e;font:normal 12px/16px 'Liberation Sans',sans-serif;letter-spacing:-0.387px;">SpecialTypeExtensions.cs</span>
<svg style="left:1247px;top:167px" width="6" height="11" viewBox="0 0 6 11"><path d="M0.6 0.9 L4.4 5.5 L0.6 10.1 Z" fill="none" stroke="#111" stroke-width="1"/></svg>
<svg style="left:1260px;top:170px" width="6" height="7" viewBox="0 0 6 7"><path d="M0.5 2.3 C1 0.2 4.1 0.2 4.6 2.3" fill="none" stroke="#3fb0ea" stroke-width="0.9"/><rect x="0" y="3.3" width="5.1" height="3.6" fill="#1ba1e2"/><rect x="2.1" y="4.2" width="1" height="1.8" fill="#fff"/></svg>
<span style="position:absolute;left:1268.8px;top:164.95px;font:bold 10.8px/15px 'Liberation Sans',sans-serif;color:#388a34;-webkit-text-stroke:0.35px #388a34;white-space:pre;transform-origin:0 0;transform:scaleX(0.72)">C</span><span style="position:absolute;left:1274.8999999999999px;top:164.7px;font:bold 8.4px/15px 'Liberation Sans',sans-serif;color:#388a34;-webkit-text-stroke:0.3px #388a34;white-space:pre;transform-origin:0 0;transform:scaleX(1.08)">#</span>
<span style="position:absolute;left:1287.0px;top:164.8px;white-space:pre;color:#1e1e1e;font:normal 12px/16px 'Liberation Sans',sans-serif;letter-spacing:-0.395px;">SpecialTypes.cs</span>
<svg style="left:1247px;top:185px" width="6" height="11" viewBox="0 0 6 11"><path d="M0.6 0.9 L4.4 5.5 L0.6 10.1 Z" fill="none" stroke="#111" stroke-width="1"/></svg>
<svg style="left:1260px;top:188px" width="6" height="7" viewBox="0 0 6 7"><path d="M0.5 2.3 C1 0.2 4.1 0.2 4.6 2.3" fill="none" stroke="#3fb0ea" stroke-width="0.9"/><rect x="0" y="3.3" width="5.1" height="3.6" fill="#1ba1e2"/><rect x="2.1" y="4.2" width="1" height="1.8" fill="#fff"/></svg>
<span style="position:absolute;left:1268.8px;top:182.95px;font:bold 10.8px/15px 'Liberation Sans',sans-serif;color:#388a34;-webkit-text-stroke:0.35px #388a34;white-space:pre;transform-origin:0 0;transform:scaleX(0.72)">C</span><span style="position:absolute;left:1274.8999999999999px;top:182.7px;font:bold 8.4px/15px 'Liberation Sans',sans-serif;color:#388a34;-webkit-text-stroke:0.3px #388a34;white-space:pre;transform-origin:0 0;transform:scaleX(1.08)">#</span>
<span style="position:absolute;left:1287.0px;top:182.8px;white-space:pre;color:#1e1e1e;font:normal 12px/16px 'Liberation Sans',sans-serif;letter-spacing:-0.219px;">SwitchConstantValueHelper.cs</span>
<svg style="left:1247px;top:203px" width="6" height="11" viewBox="0 0 6 11"><path d="M0.6 0.9 L4.4 5.5 L0.6 10.1 Z" fill="none" stroke="#111" stroke-width="1"/></svg>
<svg style="left:1260px;top:206px" width="6" height="7" viewBox="0 0 6 7"><path d="M0.5 2.3 C1 0.2 4.1 0.2 4.6 2.3" fill="none" stroke="#3fb0ea" stroke-width="0.9"/><rect x="0" y="3.3" width="5.1" height="3.6" fill="#1ba1e2"/><rect x="2.1" y="4.2" width="1" height="1.8" fill="#fff"/></svg>
<span style="position:absolute;left:1268.8px;top:200.95px;font:bold 10.8px/15px 'Liberation Sans',sans-serif;color:#388a34;-webkit-text-stroke:0.35px #388a34;white-space:pre;transform-origin:0 0;transform:scaleX(0.72)">C</span><span style="position:absolute;left:1274.8999999999999px;top:200.7px;font:bold 8.4px/15px 'Liberation Sans',sans-serif;color:#388a34;-webkit-text-stroke:0.3px #388a34;white-space:pre;transform-origin:0 0;transform:scaleX(1.08)">#</span>
<span style="position:absolute;left:1287.0px;top:200.8px;white-space:pre;color:#1e1e1e;font:normal 12px/16px 'Liberation Sans',sans-serif;letter-spacing:-0.295px;">SynthesizedLocalKind.cs</span>
<svg style="left:1247px;top:221px" width="6" height="11" viewBox="0 0 6 11"><path d="M0.6 0.9 L4.4 5.5 L0.6 10.1 Z" fill="none" stroke="#111" stroke-width="1"/></svg>
<svg style="left:1260px;top:224px" width="6" height="7" viewBox="0 0 6 7"><path d="M0.5 2.3 C1 0.2 4.1 0.2 4.6 2.3" fill="none" stroke="#3fb0ea" stroke-width="0.9"/><rect x="0" y="3.3" width="5.1" height="3.6" fill="#1ba1e2"/><rect x="2.1" y="4.2" width="1" height="1.8" fill="#fff"/></svg>
<span style="position:absolute;left:1268.8px;top:218.95px;font:bold 10.8px/15px 'Liberation Sans',sans-serif;color:#388a34;-webkit-text-stroke:0.35px #388a34;white-space:pre;transform-origin:0 0;transform:scaleX(0.72)">C</span><span style="position:absolute;left:1274.8999999999999px;top:218.7px;font:bold 8.4px/15px 'Liberation Sans',sans-serif;color:#388a34;-webkit-text-stroke:0.3px #388a34;white-space:pre;transform-origin:0 0;transform:scaleX(1.08)">#</span>
<span style="position:absolute;left:1287.0px;top:218.8px;white-space:pre;color:#1e1e1e;font:normal 12px/16px 'Liberation Sans',sans-serif;letter-spacing:-0.176px;">TreeDumper.cs</span>
<svg style="left:1247px;top:239px" width="6" height="11" viewBox="0 0 6 11"><path d="M0.6 0.9 L4.4 5.5 L0.6 10.1 Z" fill="none" stroke="#111" stroke-width="1"/></svg>
<svg style="left:1260px;top:242px" width="6" height="7" viewBox="0 0 6 7"><path d="M0.5 2.3 C1 0.2 4.1 0.2 4.6 2.3" fill="none" stroke="#3fb0ea" stroke-width="0.9"/><rect x="0" y="3.3" width="5.1" height="3.6" fill="#1ba1e2"/><rect x="2.1" y="4.2" width="1" height="1.8" fill="#fff"/></svg>
<span style="position:absolute;left:1268.8px;top:236.95px;font:bold 10.8px/15px 'Liberation Sans',sans-serif;color:#388a34;-webkit-text-stroke:0.35px #388a34;white-space:pre;transform-origin:0 0;transform:scaleX(0.72)">C</span><span style="position:absolute;left:1274.8999999999999px;top:236.7px;font:bold 8.4px/15px 'Liberation Sans',sans-serif;color:#388a34;-webkit-text-stroke:0.3px #388a34;white-space:pre;transform-origin:0 0;transform:scaleX(1.08)">#</span>
<span style="position:absolute;left:1287.0px;top:236.8px;white-space:pre;color:#1e1e1e;font:normal 12px/16px 'Liberation Sans',sans-serif;letter-spacing:-0.060px;">VersionHelper.cs</span>
<svg style="left:1247px;top:257px" width="6" height="11" viewBox="0 0 6 11"><path d="M0.6 0.9 L4.4 5.5 L0.6 10.1 Z" fill="none" stroke="#111" stroke-width="1"/></svg>
<svg style="left:1260px;top:260px" width="6" height="7" viewBox="0 0 6 7"><path d="M0.5 2.3 C1 0.2 4.1 0.2 4.6 2.3" fill="none" stroke="#3fb0ea" stroke-width="0.9"/><rect x="0" y="3.3" width="5.1" height="3.6" fill="#1ba1e2"/><rect x="2.1" y="4.2" width="1" height="1.8" fill="#fff"/></svg>
<span style="position:absolute;left:1268.8px;top:254.95px;font:bold 10.8px/15px 'Liberation Sans',sans-serif;color:#388a34;-webkit-text-stroke:0.35px #388a34;white-space:pre;transform-origin:0 0;transform:scaleX(0.72)">C</span><span style="position:absolute;left:1274.8999999999999px;top:254.7px;font:bold 8.4px/15px 'Liberation Sans',sans-serif;color:#388a34;-webkit-text-stroke:0.3px #388a34;white-space:pre;transform-origin:0 0;transform:scaleX(1.08)">#</span>
<span style="position:absolute;left:1287.0px;top:254.8px;white-space:pre;color:#1e1e1e;font:normal 12px/16px 'Liberation Sans',sans-serif;letter-spacing:0.074px;">WellKnownMember.cs</span>
<svg style="left:1247px;top:275px" width="6" height="11" viewBox="0 0 6 11"><path d="M0.6 0.9 L4.4 5.5 L0.6 10.1 Z" fill="none" stroke="#111" stroke-width="1"/></svg>
<svg style="left:1260px;top:278px" width="6" height="7" viewBox="0 0 6 7"><path d="M0.5 2.3 C1 0.2 4.1 0.2 4.6 2.3" fill="none" stroke="#3fb0ea" stroke-width="0.9"/><rect x="0" y="3.3" width="5.1" height="3.6" fill="#1ba1e2"/><rect x="2.1" y="4.2" width="1" height="1.8" fill="#fff"/></svg>
<span style="position:absolute;left:1268.8px;top:272.95px;font:bold 10.8px/15px 'Liberation Sans',sans-serif;color:#388a34;-webkit-text-stroke:0.35px #388a34;white-space:pre;transform-origin:0 0;transform:scaleX(0.72)">C</span><span style="position:absolute;left:1274.8999999999999px;top:272.7px;font:bold 8.4px/15px 'Liberation Sans',sans-serif;color:#388a34;-webkit-text-stroke:0.3px #388a34;white-space:pre;transform-origin:0 0;transform:scaleX(1.08)">#</span>
<span style="position:absolute;left:1287.0px;top:272.8px;white-space:pre;color:#1e1e1e;font:normal 12px/16px 'Liberation Sans',sans-serif;letter-spacing:0.074px;">WellKnownMembers.cs</span>
<svg style="left:1247px;top:293px" width="6" height="11" viewBox="0 0 6 11"><path d="M0.6 0.9 L4.4 5.5 L0.6 10.1 Z" fill="none" stroke="#111" stroke-width="1"/></svg>
<svg style="left:1260px;top:296px" width="6" height="7" viewBox="0 0 6 7"><path d="M0.5 2.3 C1 0.2 4.1 0.2 4.6 2.3" fill="none" stroke="#3fb0ea" stroke-width="0.9"/><rect x="0" y="3.3" width="5.1" height="3.6" fill="#1ba1e2"/><rect x="2.1" y="4.2" width="1" height="1.8" fill="#fff"/></svg>
<span style="position:absolute;left:1268.8px;top:290.95px;font:bold 10.8px/15px 'Liberation Sans',sans-serif;color:#388a34;-webkit-text-stroke:0.35px #388a34;white-space:pre;transform-origin:0 0;transform:scaleX(0.72)">C</span><span style="position:absolute;left:1274.8999999999999px;top:290.7px;font:bold 8.4px/15px 'Liberation Sans',sans-serif;color:#388a34;-webkit-text-stroke:0.3px #388a34;white-space:pre;transform-origin:0 0;transform:scaleX(1.08)">#</span>
<span style="position:absolute;left:1287.0px;top:290.8px;white-space:pre;color:#1e1e1e;font:normal 12px/16px 'Liberation Sans',sans-serif;letter-spacing:-0.121px;">WellKnownTypes.cs</span>
<svg style="left:1247px;top:311px" width="6" height="11" viewBox="0 0 6 11"><path d="M0.6 0.9 L4.4 5.5 L0.6 10.1 Z" fill="none" stroke="#111" stroke-width="1"/></svg>
<svg style="left:1260px;top:314px" width="6" height="7" viewBox="0 0 6 7"><path d="M0.5 2.3 C1 0.2 4.1 0.2 4.6 2.3" fill="none" stroke="#3fb0ea" stroke-width="0.9"/><rect x="0" y="3.3" width="5.1" height="3.6" fill="#1ba1e2"/><rect x="2.1" y="4.2" width="1" height="1.8" fill="#fff"/></svg>
<span style="position:absolute;left:1268.8px;top:308.95px;font:bold 10.8px/15px 'Liberation Sans',sans-serif;color:#388a34;-webkit-text-stroke:0.35px #388a34;white-space:pre;transform-origin:0 0;transform:scaleX(0.72)">C</span><span style="position:absolute;left:1274.8999999999999px;top:308.7px;font:bold 8.4px/15px 'Liberation Sans',sans-serif;color:#388a34;-webkit-text-stroke:0.3px #388a34;white-space:pre;transform-origin:0 0;transform:scaleX(1.08)">#</span>
<span style="position:absolute;left:1287.0px;top:308.8px;white-space:pre;color:#1e1e1e;font:normal 12px/16px 'Liberation Sans',sans-serif;letter-spacing:-0.454px;">XmlFileResolver.cs</span>
<svg style="left:1229px;top:329px" width="6" height="11" viewBox="0 0 6 11"><path d="M0.6 0.9 L4.4 5.5 L0.6 10.1 Z" fill="none" stroke="#111" stroke-width="1"/></svg>
<svg style="left:1249px;top:328px" width="15" height="15" viewBox="0 0 15 15"><path d="M2.9 10.6 H0.6 V2.4 H7.2 M6.3 0.5 H11.2 L13.6 2.9 V8.6" fill="none" stroke="#2d2d2d" stroke-width="1.1"/><path d="M10.8 0.3 L13.8 3.3 H10.8 Z" fill="#2d2d2d"/><path d="M4.2 5.2 H9.2 L11.8 7.8 V13.6 H4.2 Z" fill="#fbfcff" stroke="#2d2d2d" stroke-width="1.1"/><path d="M8.8 5 L12 8.2 H8.8 Z" fill="#2d2d2d"/><path d="M10.5 7 L14 10.5 L10.5 14 L7 10.5 Z" fill="#1ba1e2"/><path d="M10.5 8.4 V10.9 M10.5 11.7 V12.7" stroke="#fff" stroke-width="1.1"/></svg>
<span style="position:absolute;left:1269.0px;top:326.8px;white-space:pre;color:#1e1e1e;font:normal 12px/16px 'Liberation Sans',sans-serif;letter-spacing:0.027px;">Microsoft.CodeAnalysis (unloaded)</span>
<svg style="left:1229px;top:347px" width="6" height="11" viewBox="0 0 6 11"><path d="M0.6 0.9 L4.4 5.5 L0.6 10.1 Z" fill="none" stroke="#111" stroke-width="1"/></svg>
<svg style="left:1249px;top:346px" width="15" height="15" viewBox="0 0 15 15"><path d="M2.9 10.6 H0.6 V2.4 H7.2 M6.3 0.5 H11.2 L13.6 2.9 V8.6" fill="none" stroke="#2d2d2d" stroke-width="1.1"/><path d="M10.8 0.3 L13.8 3.3 H10.8 Z" fill="#2d2d2d"/><path d="M4.2 5.2 H9.2 L11.8 7.8 V13.6 H4.2 Z" fill="#fbfcff" stroke="#2d2d2d" stroke-width="1.1"/><path d="M8.8 5 L12 8.2 H8.8 Z" fill="#2d2d2d"/></svg>
<span style="position:absolute;left:1269.0px;top:344.8px;white-space:pre;color:#1e1e1e;font:normal 12px/16px 'Liberation Sans',sans-serif;letter-spacing:0.027px;">Microsoft.CodeAnalysis.Test.Utilities (unloaded)</span>
<svg style="left:1229px;top:365px" width="6" height="11" viewBox="0 0 6 11"><path d="M0.6 0.9 L4.4 5.5 L0.6 10.1 Z" fill="none" stroke="#111" stroke-width="1"/></svg>
<svg style="left:1249px;top:364px" width="15" height="15" viewBox="0 0 15 15"><path d="M2.9 10.6 H0.6 V2.4 H7.2 M6.3 0.5 H11.2 L13.6 2.9 V8.6" fill="none" stroke="#2d2d2d" stroke-width="1.1"/><path d="M10.8 0.3 L13.8 3.3 H10.8 Z" fill="#2d2d2d"/><path d="M4.2 5.2 H9.2 L11.8 7.8 V13.6 H4.2 Z" fill="#fbfcff" stroke="#2d2d2d" stroke-width="1.1"/><path d="M8.8 5 L12 8.2 H8.8 Z" fill="#2d2d2d"/></svg>
<span style="position:absolute;left:1269.0px;top:362.8px;white-space:pre;color:#1e1e1e;font:normal 12px/16px 'Liberation Sans',sans-serif;letter-spacing:-0.232px;">Roslyn.Test.PdbUtilities (unloaded)</span>
<svg style="left:1229px;top:383px" width="6" height="11" viewBox="0 0 6 11"><path d="M0.6 0.9 L4.4 5.5 L0.6 10.1 Z" fill="none" stroke="#111" stroke-width="1"/></svg>
<svg style="left:1249px;top:382px" width="15" height="15" viewBox="0 0 15 15"><path d="M2.9 10.6 H0.6 V2.4 H7.2 M6.3 0.5 H11.2 L13.6 2.9 V8.6" fill="none" stroke="#2d2d2d" stroke-width="1.1"/><path d="M10.8 0.3 L13.8 3.3 H10.8 Z" fill="#2d2d2d"/><path d="M4.2 5.2 H9.2 L11.8 7.8 V13.6 H4.2 Z" fill="#fbfcff" stroke="#2d2d2d" stroke-width="1.1"/><path d="M8.8 5 L12 8.2 H8.8 Z" fill="#2d2d2d"/></svg>
<span style="position:absolute;left:1269.0px;top:380.8px;white-space:pre;color:#1e1e1e;font:normal 12px/16px 'Liberation Sans',sans-serif;letter-spacing:-0.221px;">AnalyzerDriver (unloaded)</span>
<svg style="left:1229px;top:401px" width="6" height="11" viewBox="0 0 6 11"><path d="M0.6 0.9 L4.4 5.5 L0.6 10.1 Z" fill="none" stroke="#111" stroke-width="1"/></svg>
<svg style="left:1249px;top:400px" width="15" height="15" viewBox="0 0 15 15"><path d="M2.9 10.6 H0.6 V2.4 H7.2 M6.3 0.5 H11.2 L13.6 2.9 V8.6" fill="none" stroke="#2d2d2d" stroke-width="1.1"/><path d="M10.8 0.3 L13.8 3.3 H10.8 Z" fill="#2d2d2d"/><path d="M4.2 5.2 H9.2 L11.8 7.8 V13.6 H4.2 Z" fill="#fbfcff" stroke="#2d2d2d" stroke-width="1.1"/><path d="M8.8 5 L12 8.2 H8.8 Z" fill="#2d2d2d"/></svg>
<span style="position:absolute;left:1269.0px;top:398.8px;white-space:pre;color:#1e1e1e;font:normal 12px/16px 'Liberation Sans',sans-serif;letter-spacing:0.078px;">CommandLine (unloaded)</span>
<svg style="left:1211px;top:419px" width="6" height="11" viewBox="0 0 6 11"><path d="M0.6 0.9 L4.4 5.5 L0.6 10.1 Z" fill="none" stroke="#111" stroke-width="1"/></svg>
<svg style="left:1232px;top:418.5px" width="13" height="11" viewBox="0 0 13 11"><path d="M0 2.4 H4.8 L5.8 0 H13 V11 H0 Z" fill="#dcb67a"/><rect x="6.4" y="1" width="5.6" height="1.1" fill="#fbf3e2"/></svg>
<span style="position:absolute;left:1251.0px;top:416.8px;white-space:pre;color:#1e1e1e;font:normal 12px/16px 'Liberation Sans',sans-serif;letter-spacing:-0.515px;">CSharp</span>
<svg style="left:1210px;top:439.5px" width="7" height="7" viewBox="0 0 7 7"><path d="M6.5 0.3 V6.5 H0.3 Z" fill="#111"/></svg>
<svg style="left:1231px;top:436px" width="15" height="12" viewBox="0 0 15 12"><path d="M2 11 V3 H6 L7.5 1 H14 V11 Z" fill="#fbfcff" stroke="#dcb67a" stroke-width="1"/><path d="M0.4 5.4 H9.6 L12.6 11.3 H1.8 Z" fill="#dcb67a"/></svg>
<span style="position:absolute;left:1251.0px;top:434.8px;white-space:pre;color:#1e1e1e;font:normal 12px/16px 'Liberation Sans',sans-serif;letter-spacing:-0.425px;">Packages</span>
<svg style="left:1229px;top:455px" width="6" height="11" viewBox="0 0 6 11"><path d="M0.6 0.9 L4.4 5.5 L0.6 10.1 Z" fill="none" stroke="#111" stroke-width="1"/></svg>
<svg style="left:1249px;top:454px" width="15" height="15" viewBox="0 0 15 15"><path d="M2.9 10.6 H0.6 V2.4 H7.2 M6.3 0.5 H11.2 L13.6 2.9 V8.6" fill="none" stroke="#2d2d2d" stroke-width="1.1"/><path d="M10.8 0.3 L13.8 3.3 H10.8 Z" fill="#2d2d2d"/><path d="M4.2 5.2 H9.2 L11.8 7.8 V13.6 H4.2 Z" fill="#fbfcff" stroke="#2d2d2d" stroke-width="1.1"/><path d="M8.8 5 L12 8.2 H8.8 Z" fill="#2d2d2d"/></svg>
<span style="position:absolute;left:1269.0px;top:452.8px;white-space:pre;color:#1e1e1e;font:normal 12px/16px 'Liberation Sans',sans-serif;letter-spacing:0.027px;">Microsoft.CodeAnalysis.Compilers.Package (unloaded)</span>
<svg style="left:1229px;top:473px" width="6" height="11" viewBox="0 0 6 11"><path d="M0.6 0.9 L4.4 5.5 L0.6 10.1 Z" fill="none" stroke="#111" stroke-width="1"/></svg>
<svg style="left:1249px;top:472px" width="15" height="15" viewBox="0 0 15 15"><path d="M2.9 10.6 H0.6 V2.4 H7.2 M6.3 0.5 H11.2 L13.6 2.9 V8.6" fill="none" stroke="#2d2d2d" stroke-width="1.1"/><path d="M10.8 0.3 L13.8 3.3 H10.8 Z" fill="#2d2d2d"/><path d="M4.2 5.2 H9.2 L11.8 7.8 V13.6 H4.2 Z" fill="#fbfcff" stroke="#2d2d2d" stroke-width="1.1"/><path d="M8.8 5 L12 8.2 H8.8 Z" fill="#2d2d2d"/></svg>
<span style="position:absolute;left:1269.0px;top:470.8px;white-space:pre;color:#1e1e1e;font:normal 12px/16px 'Liberation Sans',sans-serif;letter-spacing:0.027px;">Microsoft.CodeAnalysis.Package (unloaded)</span>
<svg style="left:1229px;top:491px" width="6" height="11" viewBox="0 0 6 11"><path d="M0.6 0.9 L4.4 5.5 L0.6 10.1 Z" fill="none" stroke="#111" stroke-width="1"/></svg>
<svg style="left:1249px;top:490px" width="15" height="15" viewBox="0 0 15 15"><path d="M2.9 10.6 H0.6 V2.4 H7.2 M6.3 0.5 H11.2 L13.6 2.9 V8.6" fill="none" stroke="#2d2d2d" stroke-width="1.1"/><path d="M10.8 0.3 L13.8 3.3 H10.8 Z" fill="#2d2d2d"/><path d="M4.2 5.2 H9.2 L11.8 7.8 V13.6 H4.2 Z" fill="#fbfcff" stroke="#2d2d2d" stroke-width="1.1"/><path d="M8.8 5 L12 8.2 H8.8 Z" fill="#2d2d2d"/></svg>
<span style="position:absolute;left:1269.0px;top:488.8px;white-space:pre;color:#1e1e1e;font:normal 12px/16px 'Liberation Sans',sans-serif;letter-spacing:0.203px;">Microsoft.Net.Compilers.Package (unloaded)</span>
<svg style="left:1229px;top:509px" width="6" height="11" viewBox="0 0 6 11"><path d="M0.6 0.9 L4.4 5.5 L0.6 10.1 Z" fill="none" stroke="#111" stroke-width="1"/></svg>
<svg style="left:1249px;top:508px" width="15" height="15" viewBox="0 0 15 15"><path d="M2.9 10.6 H0.6 V2.4 H7.2 M6.3 0.5 H11.2 L13.6 2.9 V8.6" fill="none" stroke="#2d2d2d" stroke-width="1.1"/><path d="M10.8 0.3 L13.8 3.3 H10.8 Z" fill="#2d2d2d"/><path d="M4.2 5.2 H9.2 L11.8 7.8 V13.6 H4.2 Z" fill="#fbfcff" stroke="#2d2d2d" stroke-width="1.1"/><path d="M8.8 5 L12 8.2 H8.8 Z" fill="#2d2d2d"/></svg>
<span style="position:absolute;left:1269.0px;top:506.8px;white-space:pre;color:#1e1e1e;font:normal 12px/16px 'Liberation Sans',sans-serif;letter-spacing:-0.190px;">Microsoft.NETCore.Compilers.Package (unloaded)</span>
<svg style="left:1229px;top:527px" width="6" height="11" viewBox="0 0 6 11"><path d="M0.6 0.9 L4.4 5.5 L0.6 10.1 Z" fill="none" stroke="#111" stroke-width="1"/></svg>
<svg style="left:1249px;top:526px" width="15" height="15" viewBox="0 0 15 15"><path d="M2.9 10.6 H0.6 V2.4 H7.2 M6.3 0.5 H11.2 L13.6 2.9 V8.6" fill="none" stroke="#2d2d2d" stroke-width="1.1"/><path d="M10.8 0.3 L13.8 3.3 H10.8 Z" fill="#2d2d2d"/><path d="M4.2 5.2 H9.2 L11.8 7.8 V13.6 H4.2 Z" fill="#fbfcff" stroke="#2d2d2d" stroke-width="1.1"/><path d="M8.8 5 L12 8.2 H8.8 Z" fill="#2d2d2d"/></svg>
<span style="position:absolute;left:1269.0px;top:524.8px;white-space:pre;color:#1e1e1e;font:normal 12px/16px 'Liberation Sans',sans-serif;letter-spacing:-0.109px;">Roslyn.Compilers.Extension (unloaded)</span>
<svg style="left:1211px;top:545px" width="6" height="11" viewBox="0 0 6 11"><path d="M0.6 0.9 L4.4 5.5 L0.6 10.1 Z" fill="none" stroke="#111" stroke-width="1"/></svg>
<svg style="left:1232px;top:544.5px" width="13" height="11" viewBox="0 0 13 11"><path d="M0 2.4 H4.8 L5.8 0 H13 V11 H0 Z" fill="#dcb67a"/><rect x="6.4" y="1" width="5.6" height="1.1" fill="#fbf3e2"/></svg>
<span style="position:absolute;left:1251.0px;top:542.8px;white-space:pre;color:#1e1e1e;font:normal 12px/16px 'Liberation Sans',sans-serif;letter-spacing:-0.424px;">Server</span>
<svg style="left:1211px;top:563px" width="6" height="11" viewBox="0 0 6 11"><path d="M0.6 0.9 L4.4 5.5 L0.6 10.1 Z" fill="none" stroke="#111" stroke-width="1"/></svg>
<svg style="left:1232px;top:562.5px" width="13" height="11" viewBox="0 0 13 11"><path d="M0 2.4 H4.8 L5.8 0 H13 V11 H0 Z" fill="#dcb67a"/><rect x="6.4" y="1" width="5.6" height="1.1" fill="#fbf3e2"/></svg>
<span style="position:absolute;left:1251.0px;top:560.8px;white-space:pre;color:#1e1e1e;font:normal 12px/16px 'Liberation Sans',sans-serif;letter-spacing:-0.310px;">VisualBasic</span>
<svg style="left:1193px;top:581px" width="6" height="11" viewBox="0 0 6 11"><path d="M0.6 0.9 L4.4 5.5 L0.6 10.1 Z" fill="none" stroke="#111" stroke-width="1"/></svg>
<svg style="left:1214px;top:580.5px" width="13" height="11" viewBox="0 0 13 11"><path d="M0 2.4 H4.8 L5.8 0 H13 V11 H0 Z" fill="#dcb67a"/><rect x="6.4" y="1" width="5.6" height="1.1" fill="#fbf3e2"/></svg>
<span style="position:absolute;left:1233.0px;top:578.8px;white-space:pre;color:#1e1e1e;font:normal 12px/16px 'Liberation Sans',sans-serif;letter-spacing:-0.186px;">Dependencies</span>
<svg style="left:1193px;top:599px" width="6" height="11" viewBox="0 0 6 11"><path d="M0.6 0.9 L4.4 5.5 L0.6 10.1 Z" fill="none" stroke="#111" stroke-width="1"/></svg>
<svg style="left:1214px;top:598.5px" width="13" height="11" viewBox="0 0 13 11"><path d="M0 2.4 H4.8 L5.8 0 H13 V11 H0 Z" fill="#dcb67a"/><rect x="6.4" y="1" width="5.6" height="1.1" fill="#fbf3e2"/></svg>
<span style="position:absolute;left:1233.0px;top:596.8px;white-space:pre;color:#1e1e1e;font:normal 12px/16px 'Liberation Sans',sans-serif;letter-spacing:-0.229px;">EditorFeatures</span>
<svg style="left:1193px;top:617px" width="6" height="11" viewBox="0 0 6 11"><path d="M0.6 0.9 L4.4 5.5 L0.6 10.1 Z" fill="none" stroke="#111" stroke-width="1"/></svg>
<svg style="left:1214px;top:616.5px" width="13" height="11" viewBox="0 0 13 11"><path d="M0 2.4 H4.8 L5.8 0 H13 V11 H0 Z" fill="#dcb67a"/><rect x="6.4" y="1" width="5.6" height="1.1" fill="#fbf3e2"/></svg>
<span style="position:absolute;left:1233.0px;top:614.8px;white-space:pre;color:#1e1e1e;font:normal 12px/16px 'Liberation Sans',sans-serif;letter-spacing:-0.298px;">ExpressionEvaluator</span>
<svg style="left:1193px;top:635px" width="6" height="11" viewBox="0 0 6 11"><path d="M0.6 0.9 L4.4 5.5 L0.6 10.1 Z" fill="none" stroke="#111" stroke-width="1"/></svg>
<svg style="left:1214px;top:634.5px" width="13" height="11" viewBox="0 0 13 11"><path d="M0 2.4 H4.8 L5.8 0 H13 V11 H0 Z" fill="#dcb67a"/><rect x="6.4" y="1" width="5.6" height="1.1" fill="#fbf3e2"/></svg>
<span style="position:absolute;left:1233.0px;top:632.8px;white-space:pre;color:#1e1e1e;font:normal 12px/16px 'Liberation Sans',sans-serif;letter-spacing:-0.395px;">Features</span>
<svg style="left:1193px;top:653px" width="6" height="11" viewBox="0 0 6 11"><path d="M0.6 0.9 L4.4 5.5 L0.6 10.1 Z" fill="none" stroke="#111" stroke-width="1"/></svg>
<svg style="left:1214px;top:652.5px" width="13" height="11" viewBox="0 0 13 11"><path d="M0 2.4 H4.8 L5.8 0 H13 V11 H0 Z" fill="#dcb67a"/><rect x="6.4" y="1" width="5.6" height="1.1" fill="#fbf3e2"/></svg>
<span style="position:absolute;left:1233.0px;top:650.8px;white-space:pre;color:#1e1e1e;font:normal 12px/16px 'Liberation Sans',sans-serif;letter-spacing:0.022px;">Interactive</span>
<svg style="left:1193px;top:671px" width="6" height="11" viewBox="0 0 6 11"><path d="M0.6 0.9 L4.4 5.5 L0.6 10.1 Z" fill="none" stroke="#111" stroke-width="1"/></svg>
<svg style="left:1214px;top:670.5px" width="13" height="11" viewBox="0 0 13 11"><path d="M0 2.4 H4.8 L5.8 0 H13 V11 H0 Z" fill="#dcb67a"/><rect x="6.4" y="1" width="5.6" height="1.1" fill="#fbf3e2"/></svg>
<span style="position:absolute;left:1233.0px;top:668.8px;white-space:pre;color:#1e1e1e;font:normal 12px/16px 'Liberation Sans',sans-serif;letter-spacing:0.035px;">Scripting</span>
<svg style="left:1193px;top:689px" width="6" height="11" viewBox="0 0 6 11"><path d="M0.6 0.9 L4.4 5.5 L0.6 10.1 Z" fill="none" stroke="#111" stroke-width="1"/></svg>
<svg style="left:1214px;top:688.5px" width="13" height="11" viewBox="0 0 13 11"><path d="M0 2.4 H4.8 L5.8 0 H13 V11 H0 Z" fill="#dcb67a"/><rect x="6.4" y="1" width="5.6" height="1.1" fill="#fbf3e2"/></svg>
<span style="position:absolute;left:1233.0px;top:686.8px;white-space:pre;color:#1e1e1e;font:normal 12px/16px 'Liberation Sans',sans-serif;letter-spacing:-0.229px;">Test</span>
<svg style="left:1193px;top:707px" width="6" height="11" viewBox="0 0 6 11"><path d="M0.6 0.9 L4.4 5.5 L0.6 10.1 Z" fill="none" stroke="#111" stroke-width="1"/></svg>
<svg style="left:1214px;top:706.5px" width="13" height="11" viewBox="0 0 13 11"><path d="M0 2.4 H4.8 L5.8 0 H13 V11 H0 Z" fill="#dcb67a"/><rect x="6.4" y="1" width="5.6" height="1.1" fill="#fbf3e2"/></svg>
<span style="position:absolute;left:1233.0px;top:704.8px;white-space:pre;color:#1e1e1e;font:normal 12px/16px 'Liberation Sans',sans-serif;letter-spacing:0.037px;">Tools</span>
<svg style="left:1193px;top:725px" width="6" height="11" viewBox="0 0 6 11"><path d="M0.6 0.9 L4.4 5.5 L0.6 10.1 Z" fill="none" stroke="#111" stroke-width="1"/></svg>
<svg style="left:1214px;top:724.5px" width="13" height="11" viewBox="0 0 13 11"><path d="M0 2.4 H4.8 L5.8 0 H13 V11 H0 Z" fill="#dcb67a"/><rect x="6.4" y="1" width="5.6" height="1.1" fill="#fbf3e2"/></svg>
<span style="position:absolute;left:1233.0px;top:722.8px;white-space:pre;color:#1e1e1e;font:normal 12px/16px 'Liberation Sans',sans-serif;letter-spacing:-0.108px;">VisualStudio</span>
<svg style="left:1193px;top:743px" width="6" height="11" viewBox="0 0 6 11"><path d="M0.6 0.9 L4.4 5.5 L0.6 10.1 Z" fill="none" stroke="#111" stroke-width="1"/></svg>
<svg style="left:1214px;top:742.5px" width="13" height="11" viewBox="0 0 13 11"><path d="M0 2.4 H4.8 L5.8 0 H13 V11 H0 Z" fill="#dcb67a"/><rect x="6.4" y="1" width="5.6" height="1.1" fill="#fbf3e2"/></svg>
<span style="position:absolute;left:1233.0px;top:740.8px;white-space:pre;color:#1e1e1e;font:normal 12px/16px 'Liberation Sans',sans-serif;letter-spacing:-0.241px;">Workspaces</span>
<svg style="left:1193px;top:761px" width="6" height="11" viewBox="0 0 6 11"><path d="M0.6 0.9 L4.4 5.5 L0.6 10.1 Z" fill="none" stroke="#111" stroke-width="1"/></svg>
<svg style="left:1213px;top:760px" width="15" height="15" viewBox="0 0 15 15"><path d="M2.9 10.6 H0.6 V2.4 H7.2 M6.3 0.5 H11.2 L13.6 2.9 V8.6" fill="none" stroke="#2d2d2d" stroke-width="1.1"/><path d="M10.8 0.3 L13.8 3.3 H10.8 Z" fill="#2d2d2d"/><path d="M4.2 5.2 H9.2 L11.8 7.8 V13.6 H4.2 Z" fill="#fbfcff" stroke="#2d2d2d" stroke-width="1.1"/><path d="M8.8 5 L12 8.2 H8.8 Z" fill="#2d2d2d"/></svg>
<span style="position:absolute;left:1233.0px;top:758.8px;white-space:pre;color:#1e1e1e;font:normal 12px/16px 'Liberation Sans',sans-serif;letter-spacing:-0.039px;">RoslynDeployment (unloaded)</span>
</div>
<div style="position:absolute;left:1368px;top:109px;width:17px;height:675px;background:#eceef5;"></div>
<svg style="left:1372px;top:115px" width="9" height="5" viewBox="0 0 9 5"><path d="M0 5 L4.5 0 L9 5 Z" fill="#868999"/></svg>
<svg style="left:1372px;top:772px" width="9" height="5" viewBox="0 0 9 5"><path d="M0 0 L4.5 5 L9 0 Z" fill="#868999"/></svg>
<div style="position:absolute;left:1372.5px;top:613px;width:9px;height:154px;background:#c2c3c9;"></div>
<div style="position:absolute;left:1182px;top:784px;width:203px;height:17px;background:#eceef5;"></div>
<svg style="left:1188px;top:788px" width="5" height="9" viewBox="0 0 5 9"><path d="M5 0 L0 4.5 L5 9 Z" fill="#868999"/></svg>
<svg style="left:1357px;top:788px" width="5" height="9" viewBox="0 0 5 9"><path d="M0 0 L5 4.5 L0 9 Z" fill="#868999"/></svg>
<div style="position:absolute;left:1199px;top:788px;width:66px;height:9px;background:#c2c3c9;"></div>
<div style="position:absolute;left:1182px;top:800.5px;width:99px;height:20px;background:#ffffff;"></div>
<span style="position:absolute;left:1186.5px;top:802.5px;white-space:pre;color:#1e1e1e;font:normal 12px/16px 'Liberation Sans',sans-serif;letter-spacing:-0.082px;">Solution Explorer</span>
<div style="position:absolute;left:1281px;top:801px;width:86px;height:20px;background:#40508d;"></div>
<span style="position:absolute;left:1288px;top:802.5px;white-space:pre;color:#ffffff;font:normal 12px/16px 'Liberation Sans',sans-serif;letter-spacing:-0.260px;">Team Explorer</span>
</body></html>
